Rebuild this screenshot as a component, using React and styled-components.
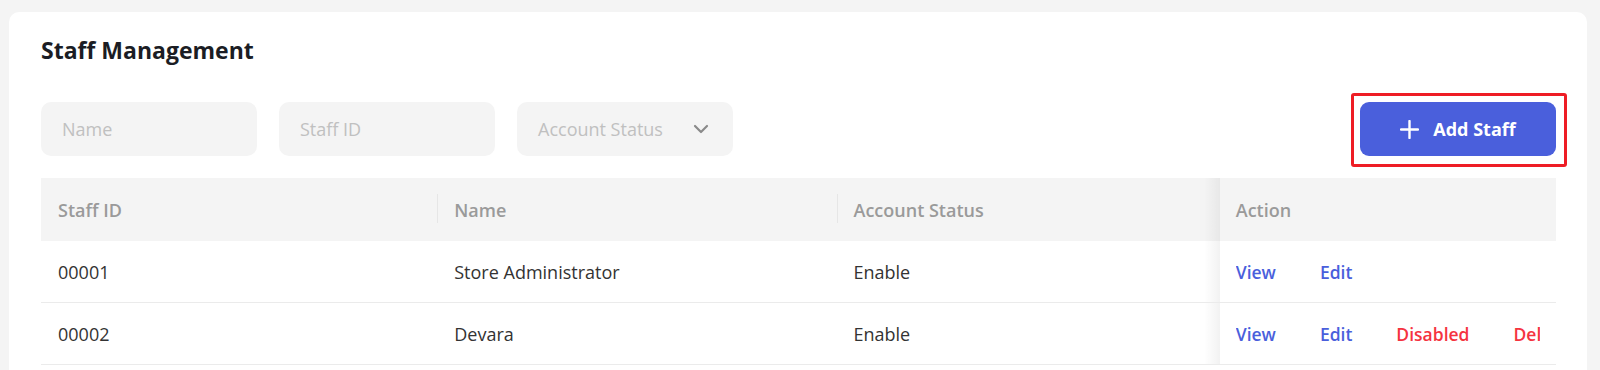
import React from "react";
import styled, { createGlobalStyle } from "styled-components";

const GlobalStyle = createGlobalStyle`
  html, body {
    margin: 0;
    background-color: #f4f4f4;
    font-family: "Open Sans", "Noto Sans", sans-serif;
  }
`;

const Page = styled.div`
  padding: 12px 13px 0 9px;
`;

const Card = styled.div`
  background-color: #ffffff;
  border-radius: 10px;
  padding: 23px 31px 40px 32px;
`;

const Title = styled.h2`
  margin: 0;
  font-size: 23px;
  line-height: 30px;
  font-weight: 700;
  color: #1b1d24;
`;

const Toolbar = styled.div`
  display: flex;
  align-items: flex-start;
  justify-content: space-between;
  margin-top: 37px;
`;

const Filters = styled.div`
  display: flex;
  gap: 22px;
`;

const Field = styled.div`
  width: 216px;
  height: 54px;
  box-sizing: border-box;
  display: flex;
  align-items: center;
  justify-content: space-between;
  padding: 0 24px 0 21px;
  background-color: #f4f4f4;
  border-radius: 10px;
  font-size: 18px;
  color: #c0c0c0;
`;

const Highlight = styled.div`
  padding: 6px 8px 8px 6px;
  border: 3px solid #ee1d25;
  border-radius: 3px;
  margin: -9px -11px -11px 0;
`;

const AddButton = styled.button`
  width: 196px;
  height: 54px;
  display: flex;
  align-items: center;
  justify-content: center;
  gap: 14px;
  border: none;
  border-radius: 9px;
  background-color: #4a5fdc;
  color: #ffffff;
  font-family: inherit;
  font-size: 18px;
  font-weight: 700;
  padding: 0;
`;

const Table = styled.table`
  width: 100%;
  margin-top: 22px;
  border-collapse: collapse;
  table-layout: fixed;
`;

const fixedShadow = `
  position: relative;
  padding: 0 16px;
  &::after {
    content: "";
    position: absolute;
    top: 0;
    bottom: 0;
    left: -16px;
    width: 16px;
    background: linear-gradient(to left, rgba(0, 0, 0, 0.05), rgba(0, 0, 0, 0));
  }
`;

const HeadCell = styled.th`
  position: relative;
  height: 63px;
  padding: 0 17px;
  text-align: left;
  background-color: #f4f4f4;
  color: #9a9a9a;
  font-size: 18px;
  font-weight: 600;

  ${({ $divider }) =>
    $divider &&
    `
    &::before {
      content: "";
      position: absolute;
      left: 0;
      top: 16px;
      width: 1px;
      height: 29px;
      background-color: #e6e6e6;
    }
  `}

  ${({ $fixed }) => $fixed && fixedShadow}
`;

const Cell = styled.td`
  height: 61px;
  padding: 0 17px;
  border-bottom: 1px solid #ebebeb;
  font-size: 18px;
  color: #333333;
  white-space: nowrap;

  ${({ $fixed }) => $fixed && fixedShadow}
`;

const Actions = styled.div`
  display: flex;
  gap: 44px;
  overflow: hidden;
  white-space: nowrap;
`;

const ActionLink = styled.a`
  flex: none;
  font-size: 17.5px;
  font-weight: 600;
  color: ${({ $danger }) => ($danger ? "#f5333f" : "#4a5fdc")};
  cursor: pointer;
`;

const Chevron = () => (
  <svg width="16" height="10" viewBox="0 0 16 10" fill="none">
    <polyline points="2,2 8,8 14,2" stroke="#8a8a8a" strokeWidth="2.2" strokeLinecap="round" strokeLinejoin="round" />
  </svg>
);

const Plus = () => (
  <svg width="19" height="19" viewBox="0 0 19 19" fill="none">
    <path d="M9.5 1v17M1 9.5h17" stroke="#ffffff" strokeWidth="2.4" strokeLinecap="round" />
  </svg>
);

const staff = [
  { id: "00001", name: "Store Administrator", status: "Enable", admin: true },
  { id: "00002", name: "Devara", status: "Enable", admin: false },
];

const App = () => {
  return (
    <Page>
      <GlobalStyle />
      <Card>
        <Title>Staff Management</Title>
        <Toolbar>
          <Filters>
            <Field>Name</Field>
            <Field>Staff ID</Field>
            <Field>
              Account Status
              <Chevron />
            </Field>
          </Filters>
          <Highlight>
            <AddButton>
              <Plus />
              Add Staff
            </AddButton>
          </Highlight>
        </Toolbar>
        <Table>
          <colgroup>
            <col style={{ width: "396px" }} />
            <col style={{ width: "399px" }} />
            <col style={{ width: "383px" }} />
            <col style={{ width: "336px" }} />
          </colgroup>
          <thead>
            <tr>
              <HeadCell>Staff ID</HeadCell>
              <HeadCell $divider>Name</HeadCell>
              <HeadCell $divider>Account Status</HeadCell>
              <HeadCell $fixed>Action</HeadCell>
            </tr>
          </thead>
          <tbody>
            {staff.map((s) => (
              <tr key={s.id}>
                <Cell>{s.id}</Cell>
                <Cell>{s.name}</Cell>
                <Cell>{s.status}</Cell>
                <Cell $fixed>
                  <Actions>
                    <ActionLink>View</ActionLink>
                    <ActionLink>Edit</ActionLink>
                    {!s.admin && <ActionLink $danger>Disabled</ActionLink>}
                    {!s.admin && <ActionLink $danger>Delete</ActionLink>}
                  </Actions>
                </Cell>
              </tr>
            ))}
          </tbody>
        </Table>
      </Card>
    </Page>
  );
};

export default App;
